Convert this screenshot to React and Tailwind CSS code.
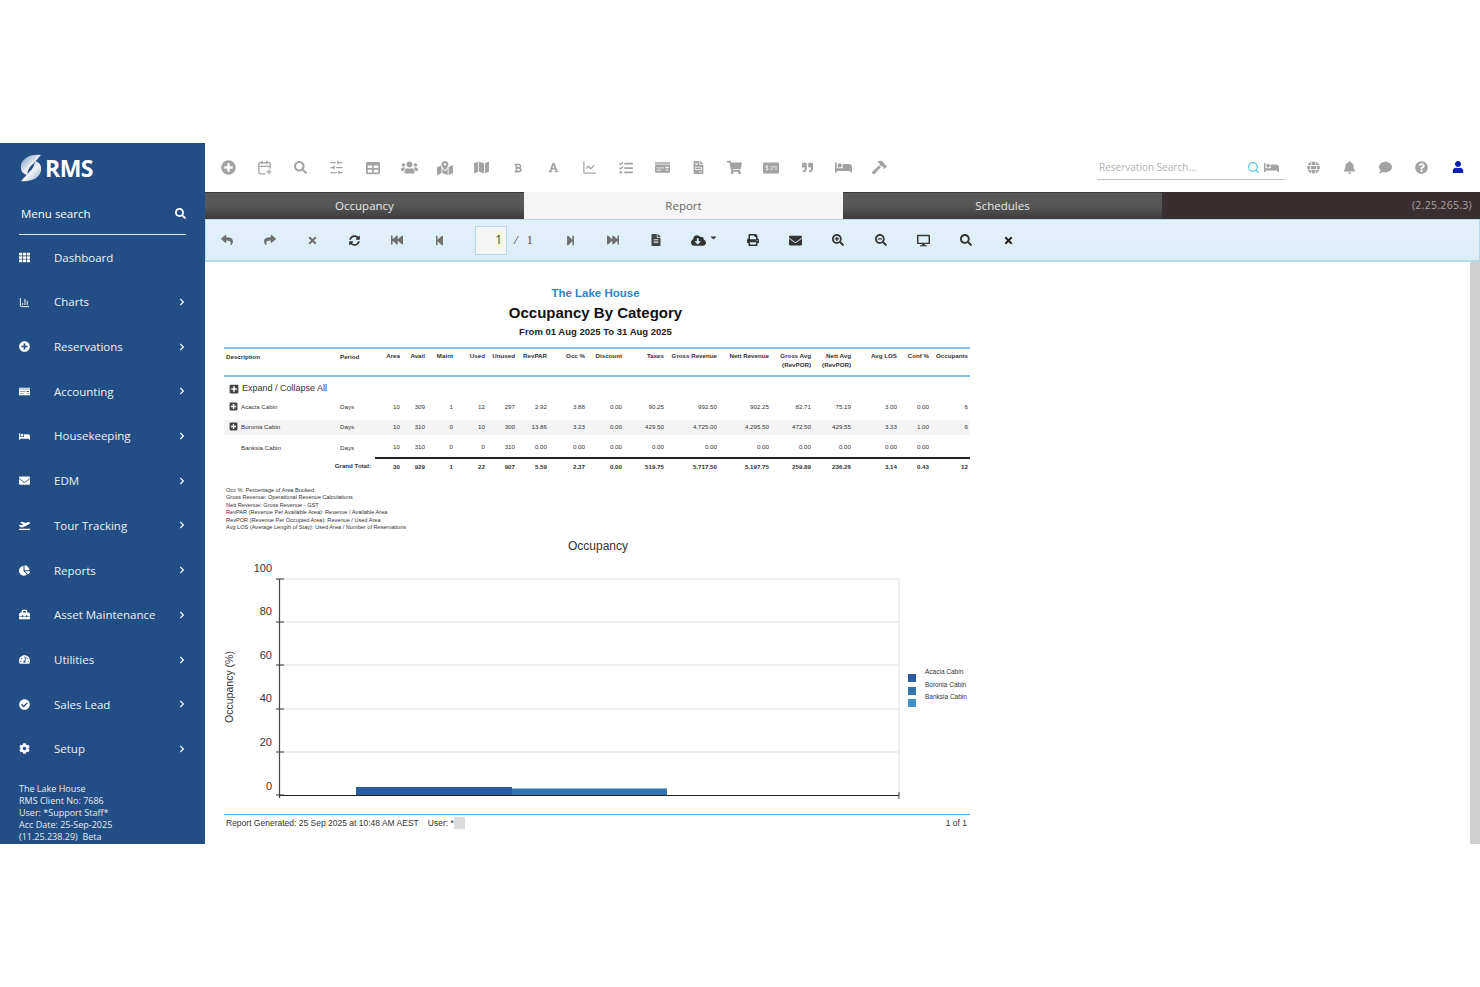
import React from "react";
import {
  FaBed, FaBell, FaBold, FaCaretDown, FaChartPie, FaCheckCircle, FaChevronRight, FaCloudDownloadAlt, FaCog, FaComment,
  FaDesktop, FaEnvelope, FaFastBackward, FaFastForward, FaFileAlt, FaFont, FaGlobe, FaHammer, FaMap, FaMapMarkedAlt,
  FaMoneyCheck, FaMoneyCheckAlt, FaPlaneDeparture, FaPlusCircle, FaPlusSquare, FaPrint, FaQuestionCircle, FaQuoteRight,
  FaRedoAlt, FaReply, FaSearch, FaSearchMinus, FaSearchPlus, FaShare, FaShoppingCart, FaStepBackward, FaStepForward,
  FaSyncAlt, FaTable, FaTachometerAlt, FaTasks, FaTh, FaTimes, FaToolbox, FaUser, FaUsers, FaFileInvoice,
} from "react-icons/fa";
import { LuCalendarPlus, LuChartLine, LuSearch, LuSlidersHorizontal, LuChartColumn } from "react-icons/lu";

const menu = [
  { label: "Dashboard", icon: FaTh },
  { label: "Charts", icon: LuChartColumn, arrow: true },
  { label: "Reservations", icon: FaPlusCircle, arrow: true },
  { label: "Accounting", icon: FaMoneyCheck, arrow: true },
  { label: "Housekeeping", icon: FaBed, arrow: true },
  { label: "EDM", icon: FaEnvelope, arrow: true },
  { label: "Tour Tracking", icon: FaPlaneDeparture, arrow: true },
  { label: "Reports", icon: FaChartPie, arrow: true },
  { label: "Asset Maintenance", icon: FaToolbox, arrow: true },
  { label: "Utilities", icon: FaTachometerAlt, arrow: true },
  { label: "Sales Lead", icon: FaCheckCircle, arrow: true },
  { label: "Setup", icon: FaCog, arrow: true },
];

const topIcons = [
  [FaPlusCircle, 15], [LuCalendarPlus, 15], [FaSearch, 13], [LuSlidersHorizontal, 15], [FaTable, 14], [FaUsers, 17],
  [FaMapMarkedAlt, 16], [FaMap, 15], [FaBold, 10], [FaFont, 11], [LuChartLine, 15], [FaTasks, 14], [FaMoneyCheck, 15],
  [FaFileInvoice, 13], [FaShoppingCart, 15], [FaMoneyCheckAlt, 16], [FaQuoteRight, 11], [FaBed, 17], [FaHammer, 15],
];

const columns = ["w-[114px]", "w-[37px]", "w-[27px]", "w-[25px]", "w-[28px]", "w-[32px]", "w-[30px]", "w-[32px]", "w-[38px]", "w-[37px]", "w-[42px]", "w-[53px]", "w-[52px]", "w-[42px]", "w-[40px]", "w-[46px]", "w-[32px]", "w-[39px]"];

const headers = ["Area", "Avail", "Maint", "Used", "Unused", "RevPAR", "Occ %", "Discount", "Taxes", "Gross Revenue", "Nett Revenue", "Gross Avg (RevPOR)", "Nett Avg (RevPOR)", "Avg LOS", "Conf %", "Occupants"];

const rows = [
  { name: "Acacia Cabin", plus: true, values: ["10", "309", "1", "12", "297", "2.92", "3.88", "0.00", "90.25", "992.50", "902.25", "82.71", "75.19", "3.00", "0.00", "6"] },
  { name: "Boronia Cabin", plus: true, shaded: true, values: ["10", "310", "0", "10", "300", "13.86", "3.23", "0.00", "429.50", "4,725.00", "4,295.50", "472.50", "429.55", "3.33", "1.00", "6"] },
  { name: "Banksia Cabin", values: ["10", "310", "0", "0", "310", "0.00", "0.00", "0.00", "0.00", "0.00", "0.00", "0.00", "0.00", "0.00", "0.00", ""] },
];

const totals = ["30", "929", "1", "22", "907", "5.59", "2.37", "0.00", "519.75", "5,717.50", "5,197.75", "259.89", "236.26", "3.14", "0.43", "12"];

const notes = [
  "Occ %: Percentage of Area Booked",
  "Gross Revenue: Operational Revenue Calculations",
  "Nett Revenue: Gross Revenue - GST",
  "RevPAR (Revenue Per Available Area): Revenue / Available Area",
  "RevPOR (Revenue Per Occupied Area): Revenue / Used Area",
  "Avg LOS (Average Length of Stay): Used Area / Number of Reservations",
];

const Logo = () => (
  <svg width="22" height="28" viewBox="0 0 22 28">
    <defs>
      <linearGradient id="swirl" x1="0" y1="0" x2="1" y2="1">
        <stop offset="0" stopColor="#6f8db3" />
        <stop offset="0.55" stopColor="#f2f5f8" />
        <stop offset="1" stopColor="#8fa8c6" />
      </linearGradient>
    </defs>
    <path d="M21 1 C12 0 3 3 1 11 C0 17 3 20 7 21 C8 16 9 13 13 10 C15 8 18 4 21 1 Z" fill="url(#swirl)" />
    <path d="M1 27 C10 28 19 25 21 17 C22 11 19 8 15 7 C14 12 13 15 9 18 C7 20 4 24 1 27 Z" fill="url(#swirl)" />
  </svg>
);

const Sidebar = () => (
  <aside className="w-[205px] shrink-0 bg-[#234d85] text-white font-['Open_Sans',sans-serif] flex flex-col">
    <div className="h-[50px] pl-[20px] pt-[11px] flex items-start gap-[3px]">
      <Logo />
      <span className="text-[23px] font-bold leading-[28px] tracking-[-0.5px]">RMS</span>
    </div>
    <div className="mx-[19px] h-[42px] border-b border-[#dfe7f0] pl-[2px] flex items-center justify-between">
      <span className="text-[11.5px]">Menu search</span>
      <FaSearch size={11} />
    </div>
    <nav className="mt-[0px]">
      {menu.map((item) => (
        <div key={item.label} className="h-[44.7px] pl-[19px] pr-[19px] flex items-center first:mt-[0px]">
          <span className="w-[35px] flex items-center">
            <item.icon size={11} />
          </span>
          <span className="text-[11.5px] flex-1 text-[#eef2f7]">{item.label}</span>
          {item.arrow && <FaChevronRight size={8} />}
        </div>
      ))}
    </nav>
    <div className="mt-auto pl-[19px] pb-[1px] text-[9px] leading-[12px] text-[#e6ecf3]">
      <div>The Lake House</div>
      <div>RMS Client No: 7686</div>
      <div>User: *Support Staff*</div>
      <div>Acc Date: 25-Sep-2025</div>
      <div>(11.25.238.29)&nbsp; Beta</div>
    </div>
  </aside>
);

const TopBar = () => (
  <div className="h-[49px] flex items-center pl-[5px] pr-[4px] text-[#a3a3a3]">
    {topIcons.map(([Icon, size], i) => (
      <span key={i} className="w-[36.2px] flex justify-center">
        <Icon size={size} />
      </span>
    ))}
    <div className="ml-auto w-[188px] h-[25px] border-b border-[#b4bdc8] flex items-center pl-[2px] pr-[6px]">
      <span className="flex-1 text-[10px] text-[#b0b0b0] font-['Open_Sans',sans-serif]">Reservation Search...</span>
      <LuSearch size={13} className="text-[#3fbde6]" />
      <FaBed size={15} className="ml-[4px]" />
    </div>
    <div className="flex ml-[10px]">
      {[FaGlobe, FaBell, FaComment, FaQuestionCircle].map((Icon, i) => (
        <span key={i} className="w-[36.2px] flex justify-center">
          <Icon size={13} />
        </span>
      ))}
      <span className="w-[36.2px] flex justify-center text-[#0a1eb4]">
        <FaUser size={12} />
      </span>
    </div>
  </div>
);

const darkTab = "w-[319px] bg-gradient-to-b from-[#5a5a5a] via-[#565656] to-[#3c3c3c] text-[#e6e6e6] border-t border-[#3a3a3a]";

const Tabs = () => (
  <div className="h-[27px] bg-[#3a2f30] flex items-stretch font-['Open_Sans',sans-serif] text-[11.5px]">
    <div className={`${darkTab} flex items-center justify-center`}>Occupancy</div>
    <div className="w-[319px] bg-[#f5f5f5] text-[#666] flex items-center justify-center">Report</div>
    <div className={`${darkTab} flex items-center justify-center`}>Schedules</div>
    <div className="ml-auto pr-[8px] flex items-center text-[10.5px] text-[#a9a5a5] tracking-[0.3px]">(2.25.265.3)</div>
  </div>
);

const ToolBtn = ({ icon: Icon, size = 12, tone = "text-[#6f6f6f]" }) => (
  <span className={`w-[42.5px] flex justify-center ${tone}`}>
    <Icon size={size} />
  </span>
);

const Toolbar = () => (
  <div className="h-[43px] bg-gradient-to-b from-[#e3f1f9] to-[#dcedf6] border border-[#b7d9ec] border-b-2 flex items-center pl-[0px]">
    <ToolBtn icon={FaReply} />
    <ToolBtn icon={FaShare} />
    <ToolBtn icon={FaTimes} size={11} />
    <ToolBtn icon={FaSyncAlt} size={11} tone="text-[#333]" />
    <ToolBtn icon={FaFastBackward} />
    <ToolBtn icon={FaStepBackward} size={11} />
    <div className="ml-[14px] w-[32px] h-[29px] bg-[#f5f5f5] border border-[#b7d9ec] flex items-center justify-end pr-[4px] text-[12px] text-[#444] font-['Open_Sans',sans-serif]">1</div>
    <span className="ml-[7px] text-[13px] text-[#334] font-['Liberation_Serif',serif] italic">/</span>
    <span className="ml-[9px] text-[12px] text-[#445] font-['Liberation_Serif',serif]">1</span>
    <span className="w-[17px]" />
    <ToolBtn icon={FaStepForward} size={11} />
    <ToolBtn icon={FaFastForward} />
    <ToolBtn icon={FaFileAlt} tone="text-[#444]" />
    <span className="w-[55px] flex items-center justify-center gap-[3px] text-[#333]">
      <FaCloudDownloadAlt size={15} />
      <FaCaretDown size={9} className="-mt-[6px]" />
    </span>
    <ToolBtn icon={FaPrint} tone="text-[#333]" />
    <ToolBtn icon={FaEnvelope} size={13} tone="text-[#333]" />
    <ToolBtn icon={FaSearchPlus} tone="text-[#333]" />
    <ToolBtn icon={FaSearchMinus} tone="text-[#333]" />
    <ToolBtn icon={FaDesktop} size={13} tone="text-[#333]" />
    <ToolBtn icon={FaSearch} tone="text-[#333]" />
    <ToolBtn icon={FaTimes} size={11} tone="text-[#222]" />
  </div>
);

const ReportTable = () => (
  <table className="table-fixed w-[746px] border-collapse text-[6.2px] text-[#333]">
    <colgroup>
      {columns.map((c, i) => (
        <col key={i} className={c} />
      ))}
    </colgroup>
    <thead>
      <tr className="h-[28px] align-top border-t-2 border-b-2 border-[#84c3e8] font-bold">
        <th className="pl-[2px] pt-[3px] text-left font-bold">Description</th>
        <th className="pl-[2px] pt-[3px] text-left font-bold">Period</th>
        {headers.map((h) => (
          <th key={h} className="pr-[2px] pt-[3px] text-right font-bold leading-[8.5px]">{h}</th>
        ))}
      </tr>
    </thead>
    <tbody>
      <tr className="h-[20px]">
        <td colSpan={18} className="pl-[5px] pt-[4px]">
          <div className="flex items-center gap-[3px] text-[9px] text-[#333]">
            <FaPlusSquare size={10} className="text-[#444]" />
            Expand / Collapse All
          </div>
        </td>
      </tr>
      {rows.map((row) => (
        <tr key={row.name} className={`h-[20.5px] ${row.shaded ? "bg-[linear-gradient(#fff_0,#fff_3px,#f4f4f4_3px,#f4f4f4_18px,#fff_18px)]" : ""}`}>
          <td className="pl-[5px]">
            <div className="flex items-center gap-[3px]">
              {row.plus ? <FaPlusSquare size={9} className="text-[#444]" /> : <span className="w-[9px]" />}
              {row.name}
            </div>
          </td>
          <td className="pl-[2px]">Days</td>
          {row.values.map((v, i) => (
            <td key={i} className="pr-[2px] text-right">{v}</td>
          ))}
        </tr>
      ))}
      <tr className="h-[17px] font-bold">
        <td className="pr-[4px] text-right" colSpan={2}>
          <span className="relative -left-[0px]">Grand Total:</span>
        </td>
        {totals.map((v, i) => (
          <td key={i} className="pr-[2px] text-right border-t-2 border-[#222]">{v}</td>
        ))}
      </tr>
    </tbody>
  </table>
);

const Chart = () => {
  const lines = [577, 620, 663, 707, 750];
  const labels = [["100", 570], ["80", 613], ["60", 657], ["40", 700], ["20", 744], ["0", 788]];
  const legend = [["Acacia Cabin", 672, 672, "#2b5c9e"], ["Boronia Cabin", 685, 685, "#3474ad"], ["Banksia Cabin", 697, 697, "#3f8fcb"]];
  return (
    <svg width="746" height="273" viewBox="224 535 746 273" className="block font-['Liberation_Sans',sans-serif]">
      <text x="598" y="548" textAnchor="middle" fontSize="12" fill="#333">Occupancy</text>
      <text transform="translate(233 685) rotate(-90)" textAnchor="middle" fontSize="10.5" fill="#333">Occupancy (%)</text>
      {lines.map((y) => (
        <line key={y} x1="280" x2="899" y1={y} y2={y} stroke="#e8e8e8" strokeWidth="1.5" />
      ))}
      <line x1="899" x2="899" y1="577" y2="793" stroke="#e8e8e8" strokeWidth="1.5" />
      {labels.map(([t, y]) => (
        <text key={t} x="272" y={y} textAnchor="end" fontSize="11" fill="#333">{t}</text>
      ))}
      {[577, 620, 663, 707, 750, 793].map((y) => (
        <line key={y} x1="276" x2="284" y1={y} y2={y} stroke="#333" strokeWidth="1" />
      ))}
      <line x1="279.5" x2="279.5" y1="577" y2="796" stroke="#444" strokeWidth="1.2" />
      <rect x="356" y="785" width="156" height="8" fill="#2b5c9e" />
      <rect x="512" y="786.5" width="155" height="6.5" fill="#3474ad" />
      <line x1="279" x2="899" y1="793.5" y2="793.5" stroke="#222" strokeWidth="1" />
      <line x1="899" x2="899" y1="790" y2="797" stroke="#444" strokeWidth="1" />
      {legend.map(([name, y, , fill], i) => (
        <g key={name}>
          <rect x="908" y={y} width="8" height="8" fill={fill} />
          <text x="925" y={672 + i * 12.5} fontSize="6.5" fill="#333">{name}</text>
        </g>
      ))}
    </svg>
  );
};

const Report = () => (
  <div className="flex-1 pl-[19px] pt-[24px] font-['Liberation_Sans',sans-serif]">
    <div className="w-[746px]">
      <div className="pr-[3px] text-center">
        <div className="text-[11.5px] leading-[14px] font-bold text-[#2a86c6]">The Lake House</div>
        <div className="mt-[3px] text-[15px] leading-[20px] font-bold text-[#111]">Occupancy By Category</div>
        <div className="mt-[2px] text-[9.5px] leading-[14px] font-bold text-[#222]">From 01 Aug 2025 To 31 Aug 2025</div>
      </div>
      <div className="mt-[8px]">
        <ReportTable />
      </div>
      <div className="mt-[12px] pl-[2px] text-[5.6px] leading-[7.5px] text-[#333]">
        {notes.map((n) => (
          <div key={n}>{n}</div>
        ))}
      </div>
      <div className="mt-[5px]">
        <Chart />
      </div>
      <div className="mt-[4px] border-t border-[#4db1e8] h-[18px] px-[2px] flex items-center text-[8.5px] text-[#333]">
        <span>Report Generated: 25 Sep 2025 at 10:48 AM AEST</span>
        <span className="ml-[9px]">User: *</span>
        <span className="w-[11px] h-[12px] bg-[#dcdcdc]" />
        <span className="ml-auto pr-[1px]">1 of 1</span>
      </div>
    </div>
  </div>
);

export default function App() {
  return (
    <div className="w-[1480px] h-[987px] bg-white pt-[143px]">
      <div className="h-[701px] flex">
        <Sidebar />
        <main className="flex-1 min-w-0 flex flex-col">
          <TopBar />
          <Tabs />
          <Toolbar />
          <div className="flex-1 min-h-0 flex">
            <Report />
            <div className="w-[10px] bg-[#cfcfcf]" />
          </div>
        </main>
      </div>
    </div>
  );
}
